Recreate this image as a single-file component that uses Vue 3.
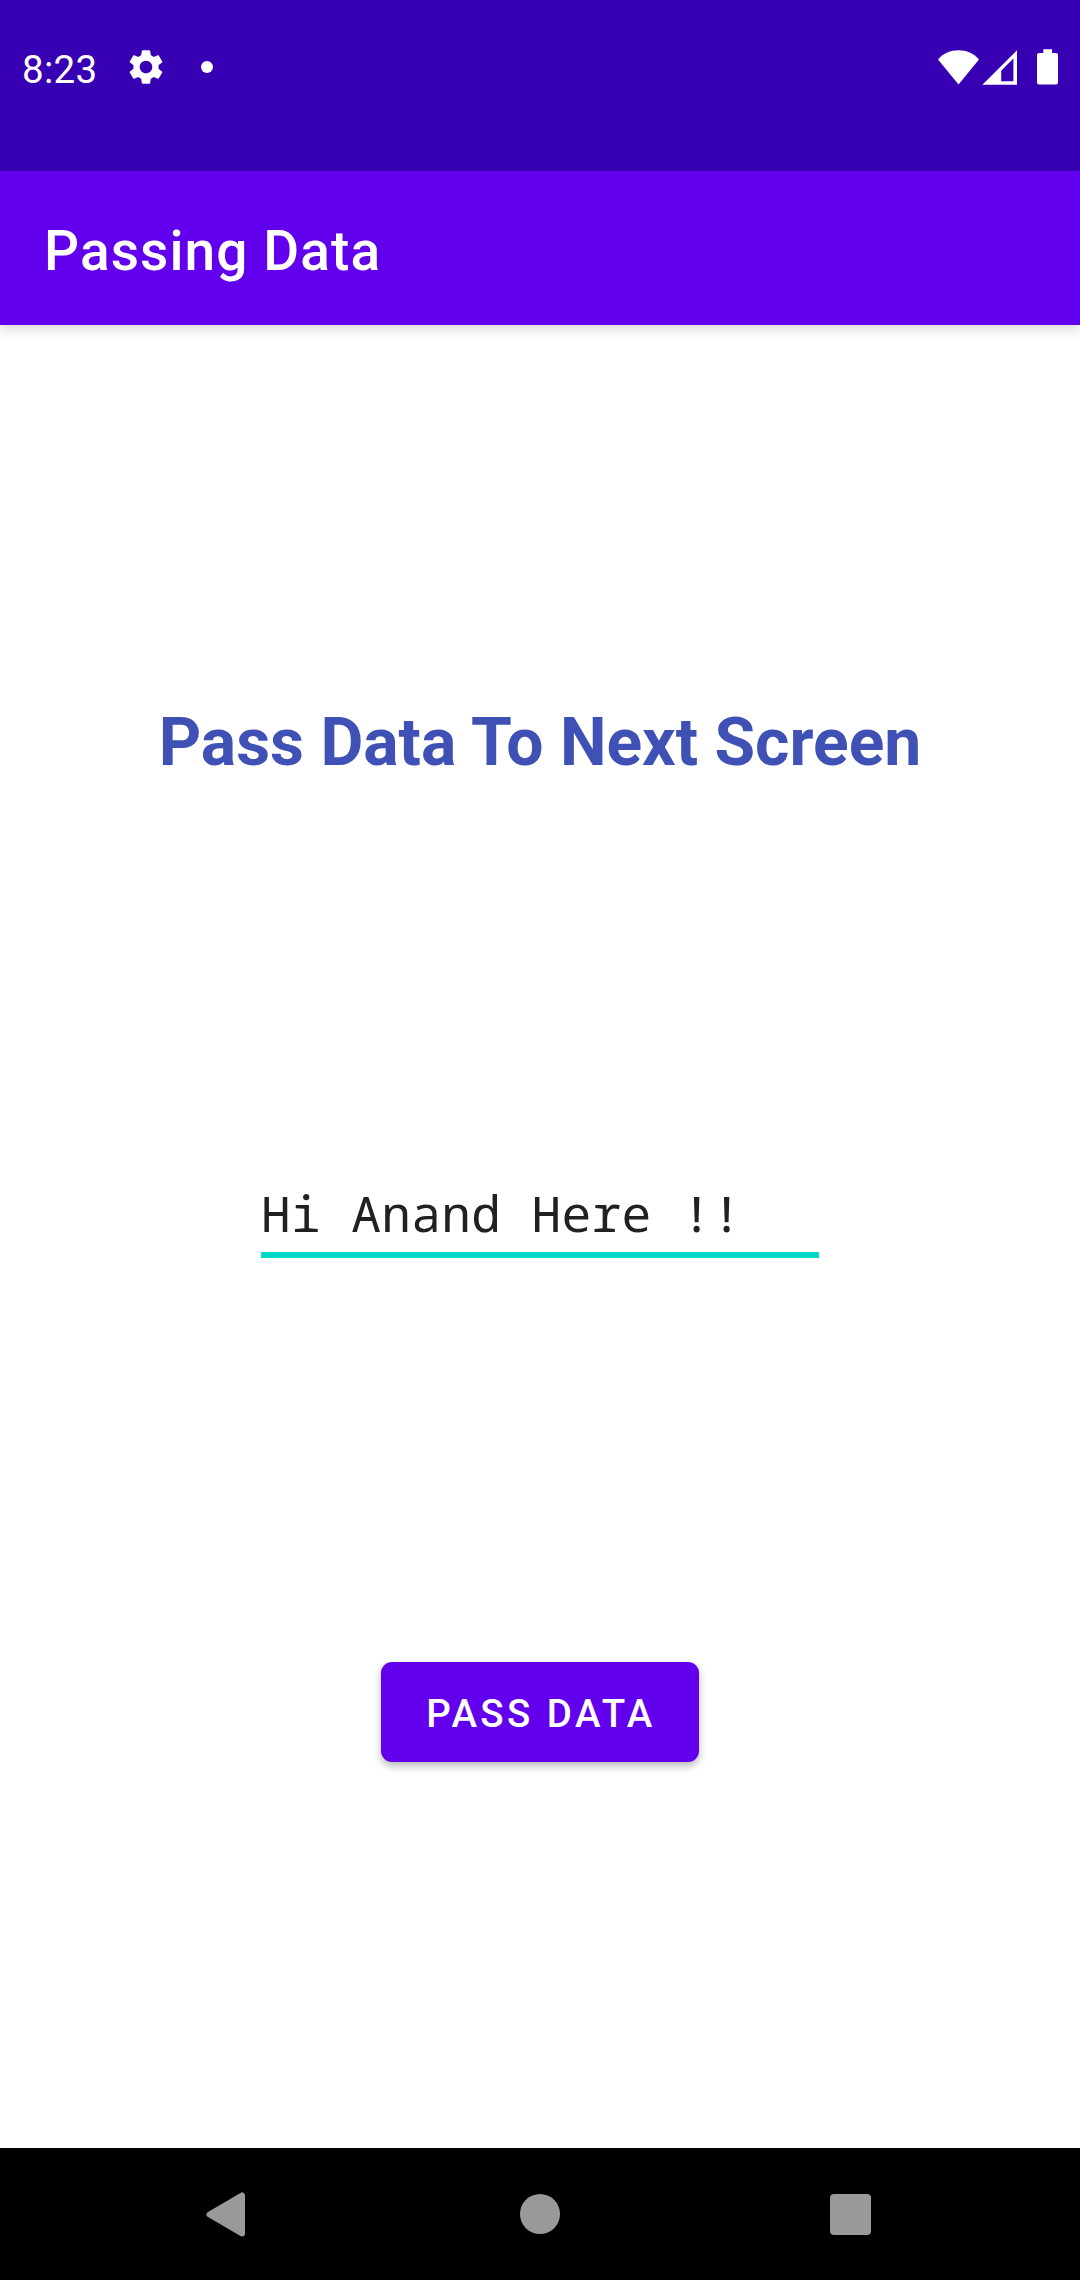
<script setup>
const title = 'Passing Data'
const heading = 'Pass Data To Next Screen'
const message = 'Hi Anand Here !!'
</script>

<template>
  <div class="screen">
    <header class="status">
      <span class="time">8:23</span>
      <svg class="gear" width="42" height="42" viewBox="0 0 24 24" fill="#fff">
        <path d="M19.14 12.94c.04-.3.06-.61.06-.94 0-.32-.02-.64-.07-.94l2.03-1.58c.18-.14.23-.41.12-.61l-1.92-3.32c-.12-.22-.37-.29-.59-.22l-2.39.96c-.5-.38-1.03-.7-1.62-.94l-.36-2.54c-.04-.24-.24-.41-.48-.41h-3.84c-.24 0-.43.17-.47.41l-.36 2.54c-.59.24-1.13.57-1.62.94l-2.39-.96c-.22-.08-.47 0-.59.22L2.74 8.87c-.12.21-.08.47.12.61l2.03 1.58c-.05.3-.09.63-.09.94s.02.64.07.94l-2.03 1.58c-.18.14-.23.41-.12.61l1.92 3.32c.12.22.37.29.59.22l2.39-.96c.5.38 1.03.7 1.62.94l.36 2.54c.05.24.24.41.48.41h3.84c.24 0 .44-.17.47-.41l.36-2.54c.59-.24 1.13-.56 1.62-.94l2.39.96c.22.08.47 0 .59-.22l1.92-3.32c.12-.22.07-.47-.12-.61l-2.01-1.58zM12 15.6c-1.98 0-3.6-1.62-3.6-3.6s1.62-3.6 3.6-3.6 3.6 1.62 3.6 3.6-1.62 3.6-3.6 3.6z" />
      </svg>
      <i class="dot"></i>
      <svg class="system" width="122" height="38" viewBox="0 0 122 38" fill="#fff">
        <path d="M0 11.5C5.5 5 12.5 2.2 20.5 2.2S35.500 5 41 11.500L20.500 36.500z" />
        <path fill-rule="evenodd" d="M79 2.300V36.700H44.300zM75.400 10.500L63.200 22.700V33.200H75.400z" />
        <path d="M105.300 1.300h8.800v3.700h3.900a2 2 0 0 1 2 2v27.500a2 2 0 0 1-2 2h-17a2 2 0 0 1-2-2V7a2 2 0 0 1 2-2h4.300z" />
      </svg>
    </header>

    <div class="appbar"><h1>{{ title }}</h1></div>

    <main class="content">
      <h2>{{ heading }}</h2>
      <div class="field">{{ message }}</div>
      <button type="button">PASS DATA</button>
    </main>

    <nav class="navbar">
      <svg width="46" height="48" viewBox="0 0 46 48">
        <path d="M6.500 23.500L39 4.500v38z" fill="#999" stroke="#999" stroke-width="6" stroke-linejoin="round" />
      </svg>
      <i class="home"></i>
      <i class="recents"></i>
    </nav>
  </div>
</template>

<style>
body {
  margin: 0;
}
</style>

<style scoped>
.screen {
  width: 1080px;
  height: 2280px;
  display: flex;
  flex-direction: column;
  overflow: hidden;
  background: #fff;
  font-family: Roboto, sans-serif;
}
.status {
  height: 171px;
  box-sizing: border-box;
  display: flex;
  align-items: flex-start;
  padding: 46px 20px 0 22px;
  background: #3700b3;
  color: #fff;
}
.time {
  width: 103px;
  font-size: 38.5px;
  line-height: 48px;
  letter-spacing: 0.3px;
}
.dot {
  width: 12px;
  height: 12px;
  margin: 15px 0 0 34px;
  border-radius: 50%;
  background: #fff;
}
.system {
  margin: 2px 0 0 auto;
}
.appbar {
  position: relative;
  height: 154px;
  flex: none;
  box-sizing: border-box;
  padding: 47px 44px 0;
  background: #6200ee;
  box-shadow: 0 4px 12px rgba(0, 0, 0, 0.16);
}
h1 {
  margin: 0;
  color: #fff;
  font-size: 55px;
  line-height: 66px;
  font-weight: 500;
  letter-spacing: 1.1px;
  white-space: nowrap;
}
.content {
  flex: 1;
  display: flex;
  flex-direction: column;
  align-items: center;
}
h2 {
  margin: 374px 0 0;
  color: #3f51b5;
  font-size: 66px;
  line-height: 88px;
  font-weight: 700;
  white-space: nowrap;
}
.field {
  width: 558px;
  margin-top: 393px;
  padding-bottom: 6px;
  border-bottom: 6px solid #03dac5;
  color: #212121;
  font-family: "Noto Sans Mono", "DejaVu Sans Mono", monospace;
  font-size: 49.5px;
  line-height: 66px;
  letter-spacing: 0.35px;
  white-space: pre;
}
button {
  width: 318px;
  height: 100px;
  margin-top: 404px;
  padding: 3px 0 0 2px;
  border: 0;
  border-radius: 11px;
  background: #6200ee;
  box-shadow: 0 4px 8px rgba(0, 0, 0, 0.28);
  color: #fff;
  font-family: inherit;
  font-size: 38.5px;
  font-weight: 500;
  letter-spacing: 0.0893em;
}
.navbar {
  height: 132px;
  box-sizing: border-box;
  display: flex;
  align-items: flex-start;
  padding: 43px 209px 0 203px;
  background: #000;
}
.home {
  width: 40px;
  height: 40px;
  margin: 3px 0 0 271px;
  border-radius: 50%;
  background: #999;
}
.recents {
  width: 41px;
  height: 41px;
  margin: 3px 0 0 270px;
  border-radius: 4px;
  background: #999;
}
</style>
